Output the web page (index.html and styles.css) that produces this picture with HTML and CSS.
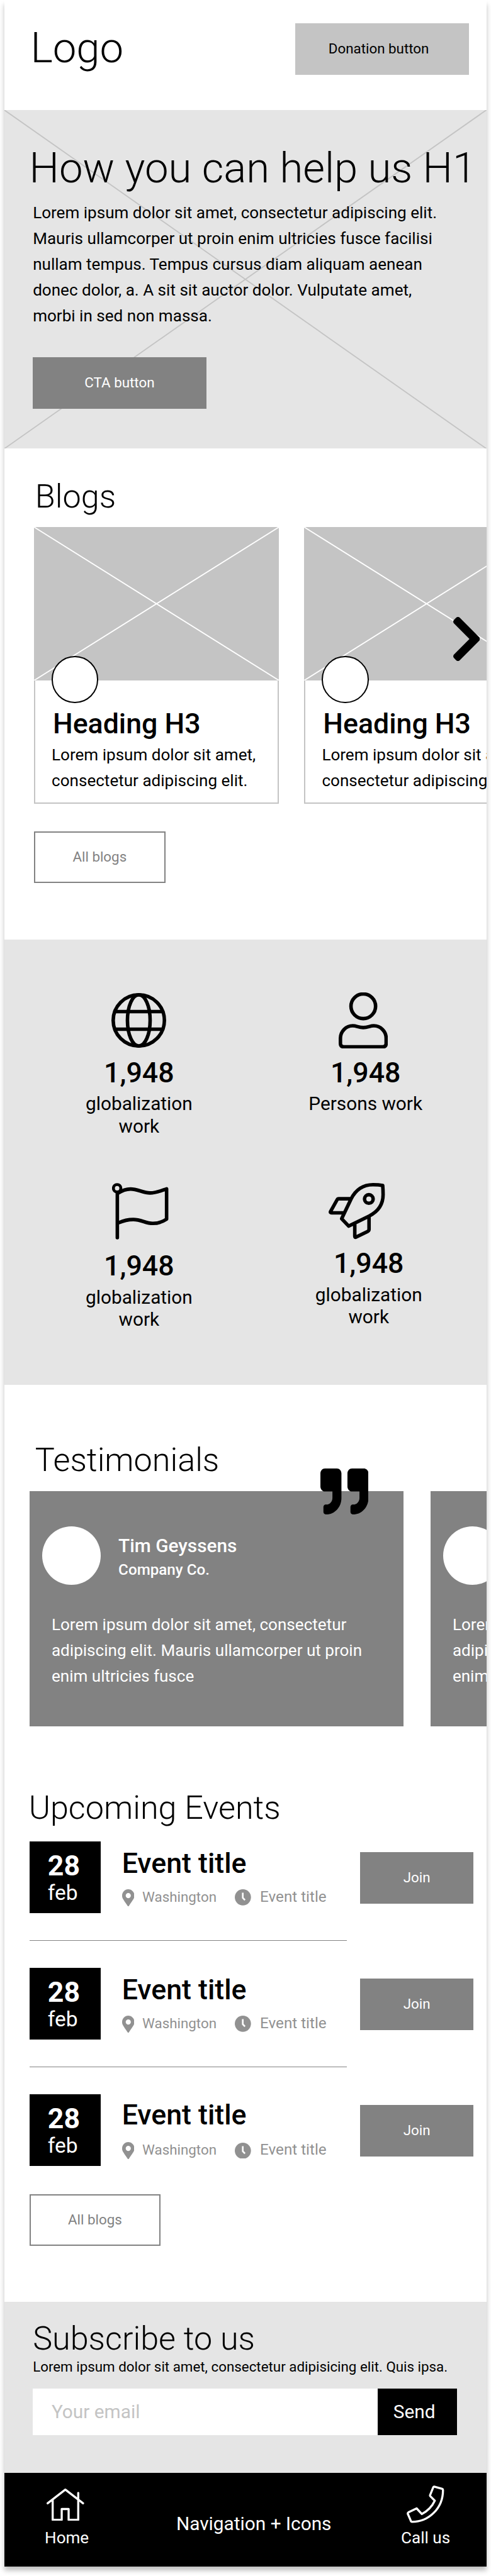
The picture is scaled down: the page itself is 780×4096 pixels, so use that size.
FILE: index.html
```
<!DOCTYPE html>
<html lang="en">
<head>
<meta charset="utf-8">
<meta name="viewport" content="width=device-width, initial-scale=1">
<title>How you can help us</title>
<link rel="stylesheet" href="styles.css">
</head>
<body>
<div class="page">
  <header class="header">
    <div class="logo">Logo</div>
    <button class="btn btn-light donate">Donation button</button>
  </header>

  <section class="hero">
    <svg class="cross" viewBox="0 0 411 289" preserveAspectRatio="none"><path d="M0 0L411 289M411 0L0 289"/></svg>
    <div class="hero-body">
      <h1>How you can help us H1</h1>
      <p class="copy">Lorem ipsum dolor sit amet, consectetur adipiscing elit.<br>Mauris ullamcorper ut proin enim ultricies fusce facilisi<br>nullam tempus. Tempus cursus diam aliquam aenean<br>donec dolor, a. A sit sit auctor dolor. Vulputate amet,<br>morbi in sed non massa.</p>
      <button class="btn btn-dark cta">CTA button</button>
    </div>
  </section>

  <section class="blogs">
    <h2>Blogs</h2>
    <div class="blog-row">
      <article class="blog">
        <div class="thumb"><svg viewBox="0 0 209 131" preserveAspectRatio="none"><path d="M0 0L209 131M209 0L0 131"/></svg><span class="face"></span></div>
        <div class="blog-body"><h3>Heading H3</h3><p class="copy">Lorem ipsum dolor sit amet,<br>consectetur adipiscing elit.</p></div>
      </article>
      <article class="blog">
        <div class="thumb"><svg viewBox="0 0 209 131" preserveAspectRatio="none"><path d="M0 0L209 131M209 0L0 131"/></svg><span class="face"></span></div>
        <div class="blog-body"><h3>Heading H3</h3><p class="copy">Lorem ipsum dolor sit amet,<br>consectetur adipiscing elit.</p></div>
      </article>
    </div>
    <svg class="next" viewBox="27.3 37.7 265.4 436.6" preserveAspectRatio="none"><path d="M285.476 272.971L91.132 467.314c-9.373 9.373-24.569 9.373-33.941 0l-22.667-22.667c-9.357-9.357-9.375-24.522-.04-33.901L188.505 256 34.484 101.255c-9.335-9.379-9.317-24.544.04-33.901l22.667-22.667c9.373-9.373 24.569-9.373 33.941 0L285.475 239.03c9.373 9.372 9.373 24.568.001 33.941z"/></svg>
    <button class="btn btn-line">All blogs</button>
  </section>

  <section class="stats">
    <div class="stat">
      <svg class="ico globe" viewBox="0 0 280 280"><circle cx="140" cy="140" r="131"/><ellipse cx="140" cy="140" rx="58" ry="131"/><path d="M18 95H262M18 185H262"/></svg>
      <strong>1,948</strong><span>globalization work</span>
    </div>
    <div class="stat">
      <svg class="ico person" viewBox="0 0 252 288"><circle cx="126" cy="71" r="63"/><path d="M9 235v26q0 18 18 18h198q18 0 18-18v-26C243 200 215 171 180 171C160 171 150 180 126 180C102 180 92 171 72 171C37 171 9 200 9 235z"/></svg>
      <strong>1,948</strong><span>Persons work</span>
    </div>
    <div class="stat stat-low">
      <svg class="ico flag" viewBox="0 0 289 289"><circle class="thin" cx="26" cy="27" r="19"/><path d="M27 50V280M31 52C55 36 75 31 95 31C130 31 160 51 194 51C228 51 255 38 279 30V185C255 201 235 207 209 207C170 207 150 187 109 187C80 187 55 194 36 203"/></svg>
      <strong>1,948</strong><span>globalization work</span>
    </div>
    <div class="stat stat-shift">
      <svg class="ico rocket" viewBox="0 0 288 288"><path d="M277 13C262 10 245 9 227 9C176 9 140 33 115 82L67 183L103 221L207 170C255 146 279 112 279 60Q279 36 277 13zM112 81H52Q46 81 43 87L10 146Q7 153 15 153H77M134 212V273Q134 281 141 277L199 249Q207 245 207 238V174"/><circle cx="206" cy="82" r="22"/></svg>
      <strong>1,948</strong><span>globalization work</span>
    </div>
  </section>

  <section class="testimonials">
    <h2>Testimonials</h2>
    <div class="quote-row">
      <article class="quote">
        <div class="who"><span class="avatar"></span><div><b>Tim Geyssens</b><i>Company Co.</i></div></div>
        <p class="copy">Lorem ipsum dolor sit amet, consectetur<br>adipiscing elit. Mauris ullamcorper ut proin<br>enim ultricies fusce</p>
      </article>
      <article class="quote">
        <div class="who"><span class="avatar"></span></div>
        <p class="copy">Lorem ipsum dolor sit amet, consectetur<br>adipiscing elit. Mauris ullamcorper ut proin<br>enim ultricies fusce</p>
      </article>
    </div>
    <svg class="marks" viewBox="0 32 512 448" preserveAspectRatio="none"><path d="M464 32H336c-26.500 0-48 21.500-48 48v128c0 26.500 21.500 48 48 48h80v64c0 35.300-28.700 64-64 64h-8c-13.300 0-24 10.700-24 24v48c0 13.300 10.700 24 24 24h8c88.400 0 160-71.600 160-160V80c0-26.500-21.500-48-48-48zm-288 0H48C21.500 32 0 53.500 0 80v128c0 26.500 21.500 48 48 48h80v64c0 35.300-28.700 64-64 64h-8c-13.300 0-24 10.700-24 24v48c0 13.300 10.700 24 24 24h8c88.400 0 160-71.600 160-160V80c0-26.500-21.500-48-48-48z"/></svg>
  </section>

  <section class="events">
    <h2>Upcoming Events</h2>
    <article class="event">
      <div class="date"><b>28</b><span>feb</span></div>
      <div class="info">
        <h3>Event title</h3>
        <div class="meta">
          <svg class="pin" viewBox="0 0 384 512" preserveAspectRatio="none"><path d="M172 502C27 291 0 269 0 192 0 86 86 0 192 0s192 86 192 192c0 77-27 99-172 310-10 13-30 13-40 0zM192 272a80 80 0 1 0 0-160 80 80 0 0 0 0 160z"/></svg>
          <span class="place">Washington</span>
          <svg class="clock" viewBox="0 0 28 28"><circle cx="14" cy="14" r="14"/><path d="M13.800 6V15L17.600 18.800"/></svg>
          <span class="time">Event title</span>
        </div>
      </div>
      <button class="btn btn-dark join">Join</button>
    </article>
    <hr>
    <article class="event">
      <div class="date"><b>28</b><span>feb</span></div>
      <div class="info">
        <h3>Event title</h3>
        <div class="meta">
          <svg class="pin" viewBox="0 0 384 512" preserveAspectRatio="none"><path d="M172 502C27 291 0 269 0 192 0 86 86 0 192 0s192 86 192 192c0 77-27 99-172 310-10 13-30 13-40 0zM192 272a80 80 0 1 0 0-160 80 80 0 0 0 0 160z"/></svg>
          <span class="place">Washington</span>
          <svg class="clock" viewBox="0 0 28 28"><circle cx="14" cy="14" r="14"/><path d="M13.800 6V15L17.600 18.800"/></svg>
          <span class="time">Event title</span>
        </div>
      </div>
      <button class="btn btn-dark join">Join</button>
    </article>
    <hr>
    <article class="event event-last">
      <div class="date"><b>28</b><span>feb</span></div>
      <div class="info">
        <h3>Event title</h3>
        <div class="meta">
          <svg class="pin" viewBox="0 0 384 512" preserveAspectRatio="none"><path d="M172 502C27 291 0 269 0 192 0 86 86 0 192 0s192 86 192 192c0 77-27 99-172 310-10 13-30 13-40 0zM192 272a80 80 0 1 0 0-160 80 80 0 0 0 0 160z"/></svg>
          <span class="place">Washington</span>
          <svg class="clock" viewBox="0 0 28 28"><circle cx="14" cy="14" r="14"/><path d="M13.800 6V15L17.600 18.800"/></svg>
          <span class="time">Event title</span>
        </div>
      </div>
      <button class="btn btn-dark join">Join</button>
    </article>
    <button class="btn btn-line">All blogs</button>
  </section>

  <section class="subscribe">
    <h2>Subscribe to us</h2>
    <p>Lorem ipsum dolor sit amet, consectetur adipisicing elit. Quis ipsa.</p>
    <form class="form"><div class="field">Your email</div><button type="button" class="send">Send</button></form>
  </section>

  <nav class="nav">
    <a class="tab home"><svg viewBox="0 0 32 28.200"><path d="M.9 13.100L16 1.400L31.100 13.100M5.200 10.500V27.200H12.900V18H18.800V27.200H27V4.200"/></svg><span>Home</span></a>
    <span class="label">Navigation + Icons</span>
    <a class="tab call"><svg viewBox="0 0 32 32"><path d="M23.500 1L30.300 2.900Q31 3.100 31 4C31 19.500 19 31 4.600 31.100Q3.800 31.100 3.600 30.300L1 24.300Q.8 23.400 1.500 23L8.500 19.600L12.900 24.400Q20.500 20.500 24 13L20.200 9.200Q19.800 8.800 20 8.200L22.700 1.600Q23 .9 23.500 1z"/></svg><span>Call us</span></a>
  </nav>
</div>
</body>
</html>
```
FILE: styles.css
```
/* 1rem is ten layout units; the frame is 411 units wide */
html { font-size: 18.626px; }
* { box-sizing: border-box; margin: 0; padding: 0; }
body { background: #fff; color: #000; font-family: Roboto, "Liberation Sans", sans-serif; overflow-x: hidden; }
svg { display: block; }
h1, h2 { font-weight: 300; white-space: nowrap; }
h1 { font-size: 3.6rem; line-height: 4.2rem; }
h2 { font-size: 2.8rem; line-height: 3.3rem; }
h3 { font-size: 2.4rem; line-height: 2.8rem; font-weight: 500; white-space: nowrap; }
.copy { font-size: 1.4rem; line-height: 2.2rem; white-space: nowrap; }

.page { width: 41.1rem; margin: 0 0 0.78rem 0.4rem; background: #fff; box-shadow: 0 0.4rem 0.4rem rgba(0, 0, 0, 0.25); }

.btn { display: flex; align-items: center; justify-content: center; height: 4.4rem; border: 0; font: 400 1.2rem/1.5rem Roboto, sans-serif; }
.btn-light { width: 14.8rem; background: #c4c4c4; color: #000; }
.btn-dark { width: 14.8rem; background: #828282; color: #fff; }
.btn-line { width: 11.2rem; background: #fff; color: #828282; border: 2px solid #828282; }

.header { display: flex; justify-content: space-between; align-items: flex-start; height: 9.4rem; padding: 2rem 1.5rem 0 2.2rem; }
.logo { font-size: 3.6rem; line-height: 4.2rem; font-weight: 300; }
.donate { padding-right: 0.6rem; }

.hero { position: relative; height: 28.9rem; background: #e5e5e5; }
.cross { position: absolute; inset: 0; width: 100%; height: 100%; fill: none; stroke: #c4c4c4; stroke-width: 1; }
.hero-body { position: relative; padding: 2.85rem 0 0 2.4rem; }
.hero h1 { margin-left: -0.3rem; }
.hero .copy { margin-top: 0.6rem; }
.cta { margin-top: 2.45rem; }

.blogs { position: relative; height: 41.9rem; padding: 2.47rem 0 0 2.5rem; overflow: hidden; }
.blogs h2 { margin-left: 0.1rem; }
.blog-row { display: flex; gap: 2.15rem; margin: 0.93rem 0 2.4rem; }
.blog { flex: none; width: 20.9rem; }
.thumb { position: relative; height: 13.1rem; background: #c4c4c4; }
.thumb svg { width: 100%; height: 100%; fill: none; stroke: #fff; stroke-width: 1; }
.face { position: absolute; left: 1.5rem; top: 11rem; width: 4rem; height: 4rem; border: 2px solid #000; border-radius: 50%; background: #fff; }
.blog-body { height: 10.5rem; padding: 2.3rem 0 0 1.4rem; border: 2px solid #c4c4c4; border-top: 0; }
.blog-body h3 { margin-left: 0.1rem; }
.blog-body .copy { margin-top: 0.15rem; }
.next { position: absolute; left: 38.24rem; top: 14.37rem; width: 2.28rem; height: 3.76rem; }

.stats { display: grid; grid-template-columns: 11rem 11rem; grid-template-rows: 16.3rem 16.3rem; column-gap: 8.32rem; height: 38rem; padding: 4.5rem 0 0 5.96rem; background: #e5e5e5; }
.stat { display: flex; flex-direction: column; align-items: center; text-align: center; }
.stat strong { margin-top: 0.68rem; font-size: 2.4rem; line-height: 2.8rem; font-weight: 500; }
.stat span { margin-top: 0.3rem; font-size: 1.6rem; line-height: 1.9rem; }
.stat-low strong { margin-top: 0.88rem; }
.stat-shift { margin: 0 -0.27rem 0 0.27rem; }
.ico { flex: none; fill: none; stroke: #000; stroke-width: 18; stroke-linecap: round; stroke-linejoin: round; }
.thin { stroke-width: 15; }
.globe { width: 4.67rem; height: 4.67rem; margin: 0.07rem 0 0.06rem; }
.person { width: 4.2rem; height: 4.8rem; margin-right: 0.42rem; }
.flag { width: 4.82rem; height: 4.82rem; margin-left: 0.22rem; }
.rocket { width: 4.8rem; height: 4.8rem; margin-right: 2rem; }

.testimonials { position: relative; height: 29.2rem; padding: 4.79rem 0 0 2.1rem; overflow: hidden; }
.testimonials h2 { margin-left: 0.5rem; }
.quote-row { display: flex; gap: 2.3rem; margin-top: 1.01rem; }
.quote { flex: none; width: 31.9rem; height: 20.1rem; padding: 3rem 0 0 1.1rem; background: #828282; color: #fff; }
.who { display: flex; gap: 1.5rem; height: 5rem; }
.avatar { width: 5rem; height: 5rem; border-radius: 50%; background: #fff; }
.who b { display: block; margin-top: 0.7rem; font-size: 1.6rem; line-height: 1.9rem; font-weight: 500; }
.who i { display: block; margin-top: 0.4rem; font-size: 1.3rem; line-height: 1.5rem; font-weight: 500; font-style: normal; }
.quote .copy { margin: 2.3rem 0 0 0.8rem; }
.marks { position: absolute; left: 26.91rem; top: 7.18rem; width: 4.1rem; height: 3.92rem; }

.events { padding: 5.29rem 1.1rem 4.8rem 2.1rem; }
.events h2 { margin: 0 0 1.21rem -0.05rem; }
.event { display: flex; height: 6.1rem; }
.date { width: 6.1rem; padding-top: 0.68rem; background: #000; color: #fff; text-align: center; }
.date b, .date span { display: block; width: 5.9rem; }
.date b { font-size: 2.4rem; line-height: 2.8rem; font-weight: 700; }
.date span { width: 5.7rem; font-size: 1.8rem; line-height: 1.8rem; }
.info { flex: 1; padding: 0.48rem 0 0 1.8rem; }
.event-last .info { padding-top: 0.38rem; }
.event-last .meta { margin-top: 0.86rem; }
.meta { display: flex; align-items: center; height: 1.5rem; margin-top: 0.76rem; color: #919191; font-size: 1.2rem; line-height: 1.5rem; white-space: nowrap; }
.pin { width: 1.05rem; height: 1.45rem; margin-right: 0.69rem; fill: #919191; fill-rule: evenodd; }
.place { width: 7.88rem; }
.clock { width: 1.38rem; height: 1.38rem; margin-right: 0.78rem; fill: #919191; }
.clock path { fill: none; stroke: #fff; stroke-width: 2.8; }
.time { font-size: 1.3rem; }
.join { width: 9.7rem; margin-top: 0.9rem; }
.events hr { width: 27.1rem; height: 1px; margin: 2.35rem 0 calc(2.35rem - 1px); border: 0; background: #828282; }
.events > .btn { margin-top: 2.4rem; }

.subscribe { height: 14.6rem; padding: 1.49rem 0 0 2.4rem; background: #e5e5e5; }
.subscribe p { margin-top: 0.05rem; font-size: 1.2rem; line-height: 1.5rem; white-space: nowrap; }
.form { display: flex; margin-top: 1.06rem; height: 4rem; font-size: 1.6rem; line-height: 1.9rem; }
.field { display: flex; align-items: center; width: 29.4rem; padding-left: 1.6rem; background: #fff; color: #c4c4c4; }
.send { width: 6.8rem; padding: 0 0 0 1.35rem; border: 0; background: #000; color: #fff; font: inherit; font-family: Roboto, sans-serif; text-align: left; }

.nav { display: flex; height: 8rem; padding-left: 2.3rem; background: #000; color: #fff; }
.tab { display: flex; flex-direction: column; align-items: center; width: 6rem; font-size: 1.4rem; line-height: 1.6rem; }
.tab svg { fill: none; stroke: #fff; stroke-width: 1.8; stroke-linecap: round; stroke-linejoin: round; }
.home svg { width: 3.2rem; height: 2.82rem; margin: 1.28rem 0.2rem 0.7rem 0; }
.call svg { width: 3.2rem; height: 3.2rem; margin: 1.09rem 0 0.51rem; }
.label { width: 14rem; margin: 3.4rem 4.65rem 0 5.95rem; font-size: 1.6rem; line-height: 1.9rem; text-align: center; }
```
